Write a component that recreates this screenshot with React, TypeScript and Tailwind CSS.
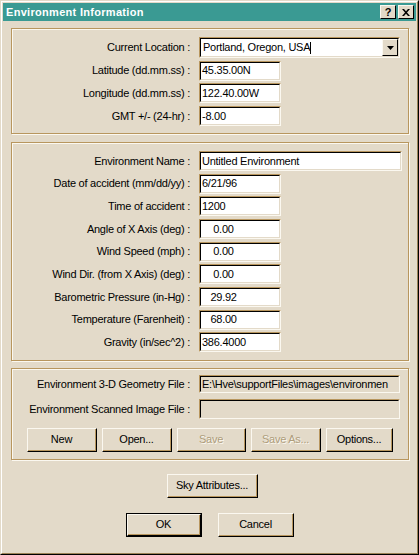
import React from "react";

const FACE = "bg-[#e3dac9]";

function Sunken({ w, h = "h-[20px]", children, ro = false }: { w: string; h?: string; children?: React.ReactNode; ro?: boolean }) {
  return (
    <div className={`${w} ${h} shrink-0 border-t border-l border-[#b8965e] border-b border-r border-b-[#fbf8f0] border-r-[#fbf8f0]`}>
      <div
        className={`h-full border-t border-l border-black border-b border-r border-b-[#e3dac9] border-r-[#e3dac9] ${ro ? FACE : "bg-white"} flex items-center overflow-hidden whitespace-pre pl-[1px] text-black`}
      >
        {children}
      </div>
    </div>
  );
}

function Btn({ w, h = "h-[24px]", label, disabled = false, def = false }: { w: string; h?: string; label: string; disabled?: boolean; def?: boolean }) {
  const inner = (
    <div className="h-full border-t border-l border-[#fbf8f0] border-b border-r border-b-black border-r-black">
      <div
        className={`h-full flex items-center justify-center border-b border-r border-[#b8965e] ${disabled ? "text-[#ae9d7c] [text-shadow:1px_1px_0_#fbf8f0]" : "text-black"}`}
      >
        {label}
      </div>
    </div>
  );
  if (def)
    return <div className={`${w} ${h} shrink-0 border border-black`}>{inner}</div>;
  return <div className={`${w} ${h} shrink-0`}>{inner}</div>;
}

function Row({ label, children }: { label: string; children: React.ReactNode }) {
  return (
    <div className="flex items-center">
      <div className="w-[180px] shrink-0 pr-[2px] text-right">{label}</div>
      <div className="ml-[7px]">{children}</div>
    </div>
  );
}

function Group({ h, className = "", children }: { h: string; className?: string; children: React.ReactNode }) {
  return (
    <div
      className={`ml-[8px] w-[398px] ${h} border border-[#b8965e] shadow-[inset_1px_1px_0_#fbf8f0,1px_1px_0_#fbf8f0] ${className}`}
    >
      {children}
    </div>
  );
}

export default function App() {
  return (
    <div
      className="w-[419px] h-[555px] border-t border-l border-[#e3dac9] border-b border-r border-b-black border-r-black text-[11px] tracking-[-0.25px] text-black"
      style={{ fontFamily: '"Liberation Sans", Arial, sans-serif' }}
    >
      <div className={`h-full ${FACE} border-t border-l border-white border-b border-r border-b-[#9c8256] border-r-[#9c8256] p-[1px]`}>
        {/* title bar */}
        <div className="h-[18px] bg-[#3a9a93] flex items-center pl-[3px] pr-[2px]">
          <span className="text-white font-bold text-[11px] tracking-[0.3px] leading-none">Environment Information</span>
          <div className="ml-auto flex items-center gap-[2px]">
            <div className="w-[16px] h-[14px] border-t border-l border-[#fbf8f0] border-b border-r border-b-black border-r-black bg-[#e3dac9] flex items-center justify-center">
              <span className="font-bold text-[11px] leading-none">?</span>
            </div>
            <div className="w-[16px] h-[14px] border-t border-l border-[#fbf8f0] border-b border-r border-b-black border-r-black bg-[#e3dac9] flex items-center justify-center">
              <svg width="8" height="7" viewBox="0 0 8 7">
                <path d="M0 0h2l2 2.2L6 0h2L5 3.5 8 7H6L4 4.8 2 7H0l3-3.5z" fill="black" />
              </svg>
            </div>
          </div>
        </div>

        <Group h="h-[106px]" className="mt-[7px] pt-[8px] flex flex-col gap-[2.6px]">
          <Row label="Current Location :">
            <div className="relative">
              <Sunken w="w-[201px]" h="h-[21px]">
                <span className="pl-[1px]">Portland, Oregon, USA</span>
                <span className="w-[1px] h-[12px] bg-black" />
              </Sunken>
              <div className="absolute right-[2px] top-[2px] w-[16px] h-[17px] bg-[#e3dac9] border-t border-l border-[#fbf8f0] border-b border-r border-b-black border-r-black flex items-center justify-center">
                <svg width="7" height="4" viewBox="0 0 7 4">
                  <path d="M0 0h7L3.5 4z" fill="black" />
                </svg>
              </div>
            </div>
          </Row>
          <Row label="Latitude (dd.mm.ss) :">
            <Sunken w="w-[82px]">45.35.00N</Sunken>
          </Row>
          <Row label="Longitude (dd.mm.ss) :">
            <Sunken w="w-[82px]">122.40.00W</Sunken>
          </Row>
          <Row label="GMT +/- (24-hr) :">
            <Sunken w="w-[82px]">-8.00</Sunken>
          </Row>
        </Group>

        <Group h="h-[219px]" className="mt-[8px] pt-[8px] flex flex-col gap-[2.67px]">
          <Row label="Environment Name :">
            <Sunken w="w-[203px]">Untitled Environment</Sunken>
          </Row>
          <Row label="Date of accident (mm/dd/yy) :">
            <Sunken w="w-[82px]">6/21/96</Sunken>
          </Row>
          <Row label="Time of accident :">
            <Sunken w="w-[82px]">1200</Sunken>
          </Row>
          <Row label="Angle of X Axis (deg) :">
            <Sunken w="w-[82px]">{"    0.00"}</Sunken>
          </Row>
          <Row label="Wind Speed (mph) :">
            <Sunken w="w-[82px]">{"    0.00"}</Sunken>
          </Row>
          <Row label="Wind Dir. (from X Axis) (deg) :">
            <Sunken w="w-[82px]">{"    0.00"}</Sunken>
          </Row>
          <Row label="Barometric Pressure (in-Hg) :">
            <Sunken w="w-[82px]">{"   29.92"}</Sunken>
          </Row>
          <Row label="Temperature (Farenheit) :">
            <Sunken w="w-[82px]">{"   68.00"}</Sunken>
          </Row>
          <Row label="Gravity (in/sec^2) :">
            <Sunken w="w-[82px]">386.4000</Sunken>
          </Row>
        </Group>

        <Group h="h-[92px]" className="mt-[7px] pt-[6px] flex flex-col">
          <Row label="Environment 3-D Geometry File :">
            <Sunken w="w-[201px]" h="h-[18px]" ro>
              {"E:\\Hve\\supportFiles\\images\\environmen"}
            </Sunken>
          </Row>
          <div className="mt-[6px]">
            <Row label="Environment Scanned Image File :">
              <Sunken w="w-[201px]" ro />
            </Row>
          </div>
          <div className="mt-[9px] ml-[15px] flex gap-[5px]">
            <Btn w="w-[70px]" label="New" />
            <Btn w="w-[70px]" label="Open..." />
            <Btn w="w-[69px]" label="Save" disabled />
            <Btn w="w-[70px]" label="Save As..." disabled />
            <Btn w="w-[67px]" label="Options..." />
          </div>
        </Group>

        <div className="mt-[14px] flex justify-center pl-[6px]">
          <Btn w="w-[91px]" label="Sky Attributes..." />
        </div>

        <div className="mt-[15px] flex pl-[123px] gap-[16px]">
          <Btn w="w-[76px]" label="OK" def />
          <Btn w="w-[76px]" label="Cancel" />
        </div>
      </div>
    </div>
  );
}
